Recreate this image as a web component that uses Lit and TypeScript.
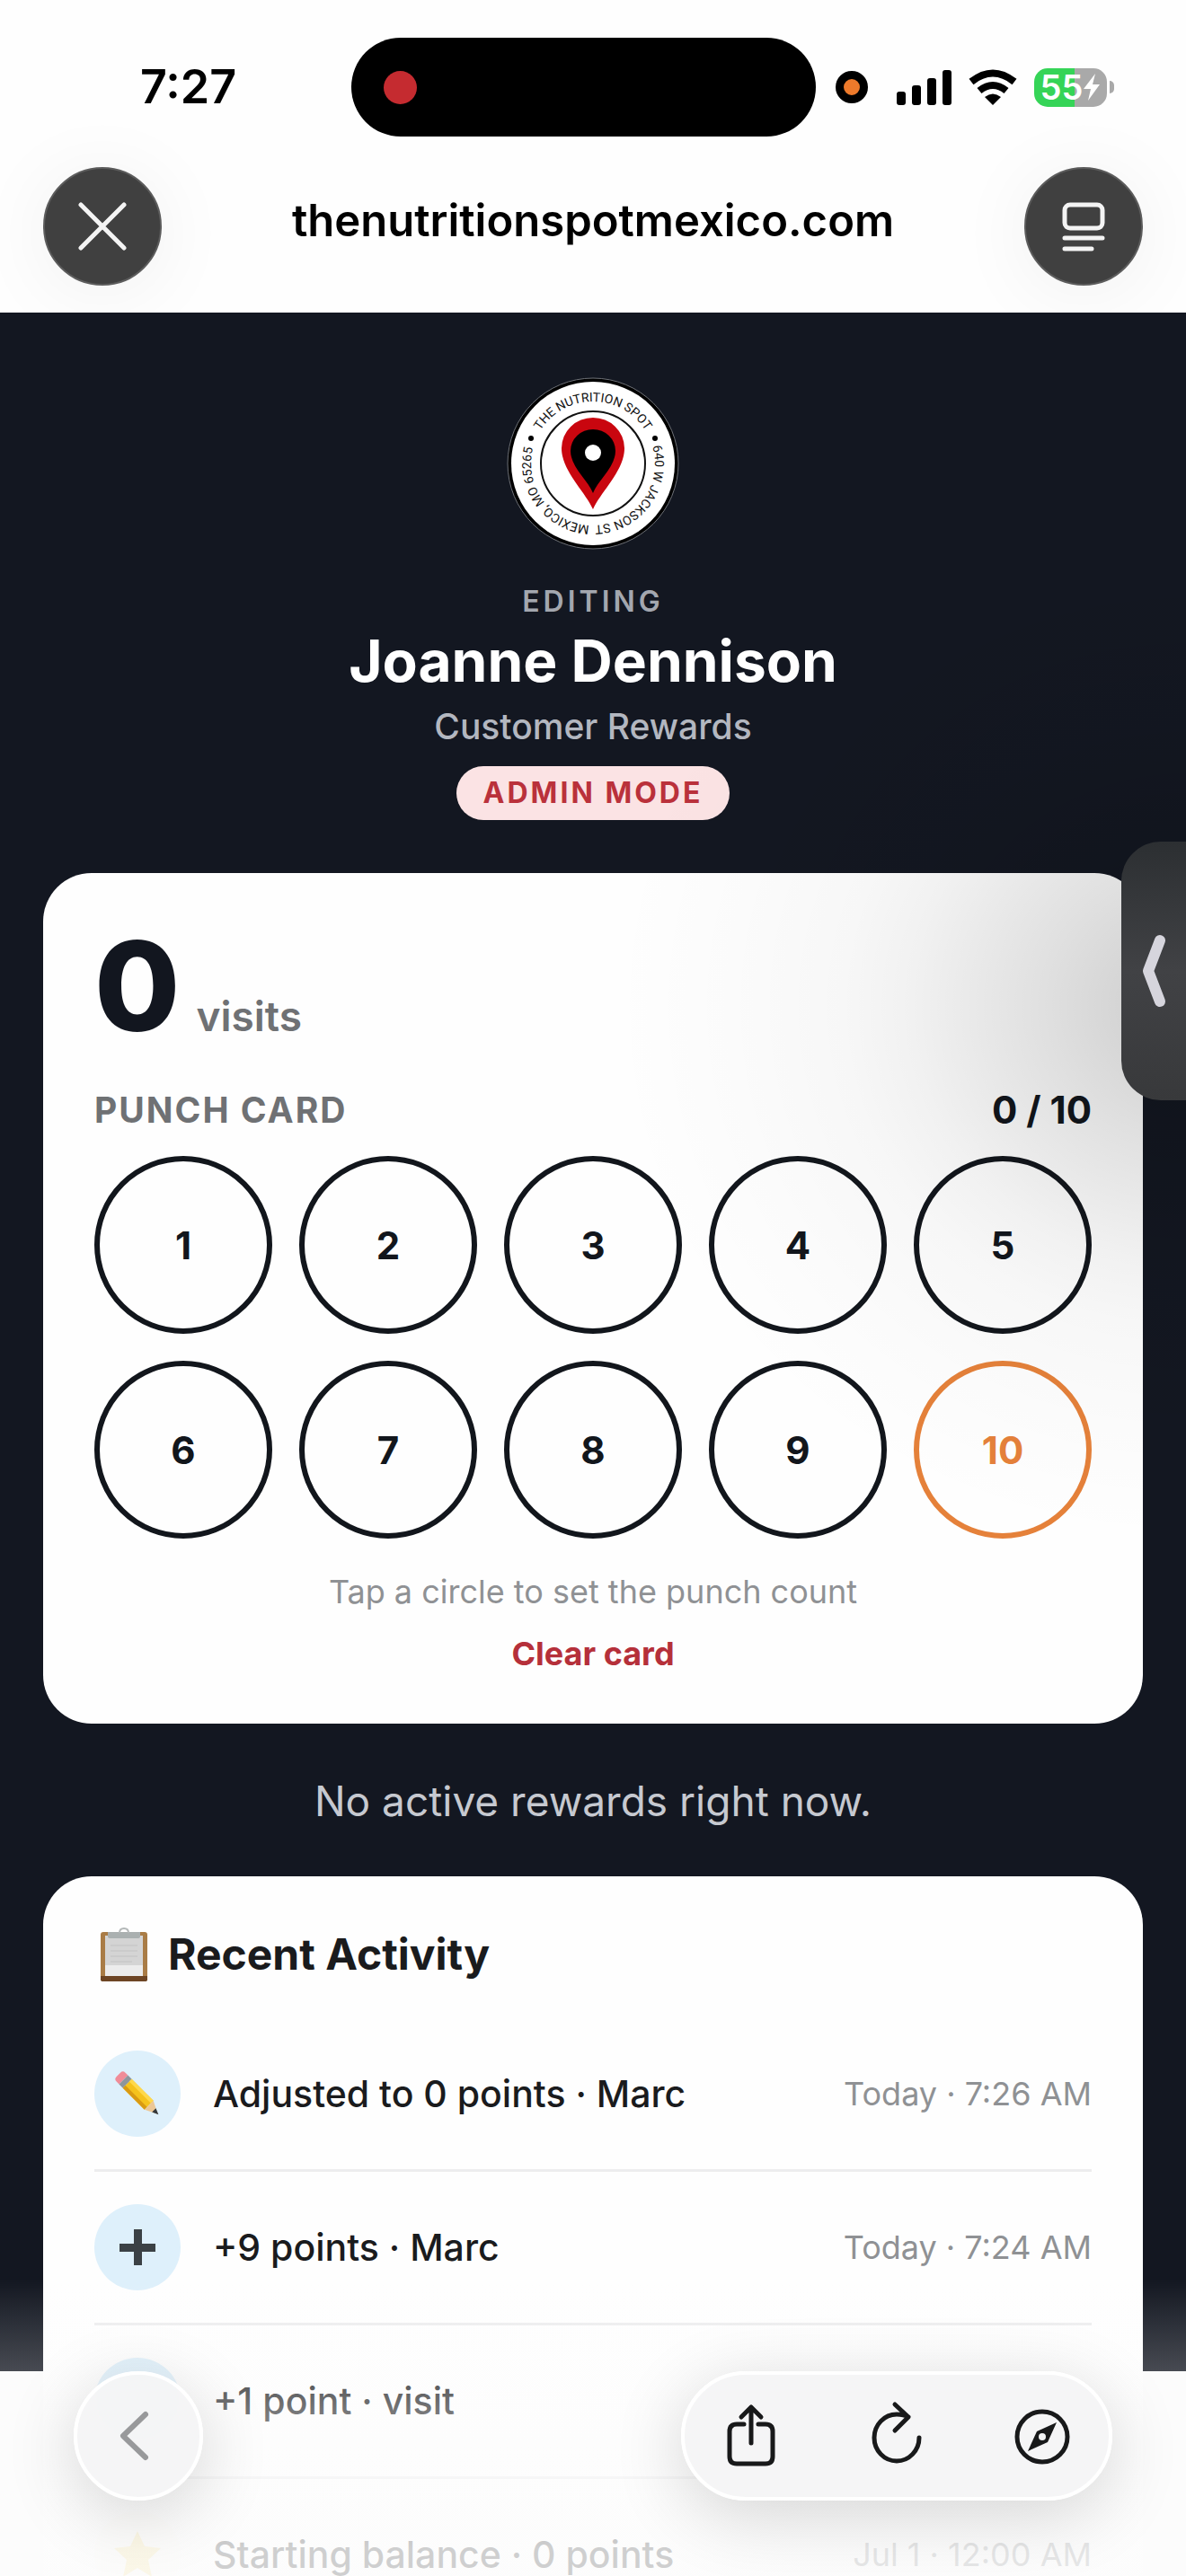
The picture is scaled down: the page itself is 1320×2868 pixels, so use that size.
import { css, html, svg, LitElement } from 'lit';
import { customElement, property, state } from 'lit/decorators.js';
import { classMap } from 'lit/directives/class-map.js';

interface Activity {
    icon: string;
    text: string;
    date: string;
}

const ACTIVITIES: Activity[] = [
    { icon: 'pencil', text: 'Adjusted to 0 points · Marc', date: 'Today · 7:26 AM' },
    { icon: 'plus', text: '+9 points · Marc', date: 'Today · 7:24 AM' },
    { icon: 'blank', text: '+1 point · visit', date: '' },
    { icon: 'star', text: 'Starting balance · 0 points', date: 'Jul 1 · 12:00 AM' },
];

const icons: Record<string, unknown> = {
    pencil: svg`
        <g transform="rotate(-45 26 26)">
            <path d="M19 0q0-4 4-4h6q4 0 4 4v4H19z" fill="#f08c98"/>
            <path d="M19 4h14v6H19z" fill="#8d959c"/>
            <path d="M19 10h14v34H19z" fill="#f5c21c"/>
            <path d="M19 10h4v34h-4z" fill="#d99a12"/>
            <path d="M29 10h4v34h-4z" fill="#ffd84a"/>
            <path d="M19 44h14l-7 14z" fill="#ecc796"/>
            <path d="M23 52h6l-3 7z" fill="#33373a"/>
        </g>`,
    plus: svg`<path d="M22 6h9v16h15v9H31v15h-9V31H6v-9h16z" fill="#3b4145"/>`,
    blank: svg``,
    star: svg`<path d="M26 0l8 17 18 2-14 13 4 19-16-10-16 10 4-19L0 19l18-2z" fill="#f8e59a"/>`,
};

@customElement('spot-logo')
export class SpotLogo extends LitElement {

    static styles = css`
            :host {
                display: block;
            }
            .logo {
                display: block;
                width: 192px;
                height: 192px;
            }
            .ring-text {
                font-family: Roboto, "Liberation Sans", sans-serif;
                font-size: 14px;
                fill: #111;
                text-anchor: middle;
            }
        `;

    render() {
        return html`
          <svg class="logo" viewBox="-96 -96 192 192" role="img" aria-label="The Nutrition Spot">
            <defs>
                <path id="ring" d="M0 69A69 69 0 0 1 0 -69A69 69 0 0 1 0 69"/>
            </defs>
            <circle r="95" fill="#000" stroke="#6d7076" stroke-width="1"/>
            <circle r="91" fill="#fff"/>
            <circle r="58" fill="none" stroke="#111" stroke-width="2"/>
            <text class="ring-text"><textPath href="#ring" startOffset="50%">THE NUTRITION SPOT</textPath></text>
            <text class="ring-text"><textPath href="#ring" startOffset="85%">640 W JACKSON ST</textPath></text>
            <text class="ring-text"><textPath href="#ring" startOffset="15%">MEXICO, MO 65265</textPath></text>
            <circle cx="-69" cy="-28" r="3"/>
            <circle cx="69" cy="-28" r="3"/>
            <path d="M0 51C-9 31-35 8-35-17A35 34 0 0 1 35-17C35 8 9 31 0 51z" fill="#c9060f"/>
            <path d="M0 33C-6 18-25 4-25-14A25 24 0 0 1 25-14C25 4 6 18 0 33z" fill="#000"/>
            <circle cy="-12" r="9" fill="#fff"/>
          </svg>`;
    }
}

@customElement('browser-header')
export class BrowserHeader extends LitElement {

    @property()
    address = '';

    static styles = css`
            :host {
                display: block;
                background-color: #fefefe;
                color: #000;
            }
            .status {
                display: grid;
                grid-template-columns: 391fr 517fr 412fr;
                align-items: center;
                padding-top: 42px;
            }
            .time {
                padding-left: 156px;
                font-size: 52px;
                font-weight: 600;
                line-height: 60px;
            }
            .island {
                display: flex;
                align-items: center;
                height: 110px;
                padding-left: 36px;
                border-radius: 55px;
                background-color: #000;
                box-sizing: border-box;
            }
            .recording {
                width: 37px;
                height: 37px;
                border-radius: 50%;
                background-color: #c52b30;
            }
            .indicators {
                display: flex;
                align-items: center;
                padding-left: 22px;
            }
            .camera {
                width: 18px;
                height: 18px;
                border: 9px solid #000;
                border-radius: 50%;
                background-color: #ee7a2b;
                margin-right: 32px;
            }
            .signal {
                width: 62px;
                height: 42px;
                margin-right: 17px;
            }
            .wifi {
                width: 56px;
                height: 42px;
                margin-right: 18px;
            }
            .battery {
                display: flex;
                align-items: center;
                justify-content: center;
                width: 81px;
                height: 43px;
                border-radius: 15px;
                background: linear-gradient(to right, #35d457 56%, #a9a9a9 56%);
                color: #fff;
                font-size: 38px;
                font-weight: 600;
            }
            .bolt {
                width: 20px;
                height: 30px;
            }
            .nub {
                width: 5px;
                height: 14px;
                margin-left: 3px;
                border-radius: 0 5px 5px 0;
                background-color: #a9a9a9;
            }
            .nav {
                display: flex;
                align-items: center;
                justify-content: space-between;
                padding: 34px 48px 30px;
            }
            .address {
                font-size: 49px;
                font-weight: 600;
                line-height: 60px;
                padding-bottom: 12px;
            }
            .round {
                display: flex;
                align-items: center;
                justify-content: center;
                width: 132px;
                height: 132px;
                padding: 0;
                border: 2px solid #5c5c5c;
                border-radius: 50%;
                background-color: #404040;
                box-shadow: 0 8px 90px rgba(0, 0, 0, 0.06);
            }
            .round svg {
                width: 60px;
                height: 60px;
                fill: none;
                stroke: #f4f4f4;
                stroke-width: 5;
                stroke-linecap: round;
                stroke-linejoin: round;
            }
        `;

    render() {
        return html`
          <div class="status">
            <span class="time">7:27</span>
            <div class="island"><span class="recording"></span></div>
            <div class="indicators">
                <span class="camera"></span>
                <svg class="signal" viewBox="0 0 62 42">
                    <rect x="0" y="26" width="10" height="15" rx="3"/>
                    <rect x="17" y="19" width="10" height="22" rx="3"/>
                    <rect x="34" y="11" width="10" height="30" rx="3"/>
                    <rect x="51" y="2" width="10" height="39" rx="3"/>
                </svg>
                <svg class="wifi" viewBox="0 0 56 42">
                    <path d="M28 41l-9-9q9-7 18 0z"/>
                    <path d="M13 25q15-12 30 0M4 15q24-19 48 0" fill="none" stroke="#000" stroke-width="8"/>
                </svg>
                <span class="battery">55<svg class="bolt" viewBox="0 0 20 30"><path d="M14 0L1 17h8L6 30 19 12h-8z" fill="#fff"/></svg></span>
                <span class="nub"></span>
            </div>
          </div>
          <nav class="nav">
            <button class="round" aria-label="Close">
                <svg viewBox="0 0 60 60"><path d="M6 6l48 48M54 6L6 54"/></svg>
            </button>
            <span class="address">${this.address}</span>
            <button class="round" aria-label="Reader">
                <svg viewBox="0 0 60 60"><rect x="9" y="6" width="42" height="26" rx="6"/><path d="M9 43h42M9 55h30"/></svg>
            </button>
          </nav>`;
    }
}

@customElement('punch-card')
export class PunchCard extends LitElement {

    @property({ type: Number })
    total = 10;

    @state()
    count = 0;

    static styles = css`
            :host {
                display: block;
            }
            .score {
                display: flex;
                align-items: baseline;
                gap: 18px;
                color: #6f7174;
                font-size: 46px;
                font-weight: 600;
            }
            .number {
                color: #12161f;
                font-size: 138px;
                font-weight: 800;
                line-height: 138px;
            }
            .heading {
                display: flex;
                justify-content: space-between;
                margin: 44px 0 26px;
                line-height: 50px;
            }
            .label {
                color: #6f7174;
                font-size: 39px;
                font-weight: 700;
                letter-spacing: 2px;
            }
            .progress {
                font-size: 42px;
                font-weight: 700;
            }
            .punches {
                display: grid;
                grid-template-columns: repeat(5, 1fr);
                gap: 30px;
            }
            .punch {
                aspect-ratio: 1;
                padding: 0;
                border: 6px solid #12161c;
                border-radius: 50%;
                background: none;
                color: #12161c;
                font-family: inherit;
                font-size: 42px;
                font-weight: 700;
            }
            .punch.filled {
                background-color: #12161c;
                color: #fff;
            }
            .punch.last {
                border-color: #e5813a;
                color: #e5813a;
            }
            .hint {
                margin: 35px 0 21px;
                color: #8f9194;
                font-size: 36px;
                line-height: 48px;
                text-align: center;
            }
            .clear {
                display: block;
                margin: 0 auto;
                padding: 0;
                border: 0;
                background: none;
                color: #b5303a;
                font-family: inherit;
                font-size: 36px;
                font-weight: 700;
                line-height: 48px;
            }
        `;

    render() {
        const numbers = Array.from({ length: this.total }, (_, i) => i + 1);
        return html`
          <div class="score"><span class="number">${this.count}</span> visits</div>
          <div class="heading">
            <span class="label">PUNCH CARD</span>
            <span class="progress">${this.count} / ${this.total}</span>
          </div>
          <div class="punches">
            ${numbers.map((n) => html`
                <button
                    class=${classMap({ punch: true, filled: n <= this.count, last: n === this.total })}
                    @click="${() => { this.count = n; }}">${n}</button>`)}
          </div>
          <p class="hint">Tap a circle to set the punch count</p>
          <button class="clear" @click="${() => { this.count = 0; }}">Clear card</button>`;
    }
}

@customElement('activity-list')
export class ActivityList extends LitElement {

    @property({ attribute: false })
    items: Activity[] = [];

    static styles = css`
            :host {
                display: block;
            }
            .title {
                display: flex;
                align-items: center;
                gap: 18px;
                margin: 0 0 41px;
                font-size: 48px;
                font-weight: 700;
                line-height: 60px;
                color: #1a1b1d;
            }
            .clipboard {
                width: 64px;
                height: 60px;
            }
            .list {
                margin: 0;
                padding: 0;
                list-style: none;
            }
            .row {
                display: flex;
                align-items: center;
                padding: 36px 0;
                border-bottom: 3px solid #ededee;
            }
            .icon {
                display: flex;
                align-items: center;
                justify-content: center;
                width: 96px;
                height: 96px;
                margin-right: 36px;
                border-radius: 50%;
                background-color: #def0fb;
            }
            .icon.star {
                background-color: #fdfcf8;
            }
            .icon svg {
                width: 52px;
                height: 52px;
                overflow: visible;
            }
            .text {
                flex: 1;
                color: #1a1b1d;
                font-size: 41px;
                font-weight: 500;
                line-height: 50px;
            }
            .date {
                color: #8f9194;
                font-size: 36px;
            }
        `;

    render() {
        return html`
          <h2 class="title">
            <svg class="clipboard" viewBox="0 0 64 60">
                <rect x="7" y="5" width="52" height="55" rx="3" fill="#a97c46"/>
                <path d="M7 54h52v4q0 2-3 2H10q-3 0-3-2z" fill="#6d4524"/>
                <rect x="12" y="9" width="42" height="45" fill="#d4d4d4"/>
                <path d="M12 42h42v12H12z" fill="#ececec"/>
                <path d="M18 20h30M18 26h30M18 32h30M18 38h24" stroke="#cbcbcb" stroke-width="2"/>
                <path d="M15 5h36v5q0 2-3 2H18q-3 0-3-2z" fill="#aab0b0"/>
                <path d="M28 6q0-5 5-5t5 5" fill="none" stroke="#b4b8b8" stroke-width="2"/>
            </svg>
            Recent Activity
          </h2>
          <ul class="list">
            ${this.items.map((item) => html`
                <li class="row">
                    <span class="icon ${item.icon}"><svg viewBox="0 0 52 52">${icons[item.icon]}</svg></span>
                    <span class="text">${item.text}</span>
                    <span class="date">${item.date}</span>
                </li>`)}
          </ul>`;
    }
}

@customElement('browser-toolbar')
export class BrowserToolbar extends LitElement {

    static styles = css`
            :host {
                display: flex;
                justify-content: space-between;
                padding: 0 82px 84px;
            }
            .back, .actions {
                display: flex;
                align-items: center;
                height: 144px;
                box-sizing: border-box;
                border: 4px solid #fff;
                border-radius: 72px;
                background-color: rgba(244, 244, 245, 0.93);
                box-shadow: 0 16px 80px rgba(0, 0, 0, 0.16);
                backdrop-filter: blur(12px);
            }
            .back {
                justify-content: center;
                width: 144px;
                padding: 0;
            }
            .actions {
                gap: 82px;
                padding: 0 34px;
            }
            .action {
                display: flex;
                padding: 0;
                border: 0;
                background: none;
            }
            svg {
                width: 80px;
                height: 80px;
                fill: none;
                stroke: #18191a;
                stroke-width: 5;
                stroke-linecap: round;
                stroke-linejoin: round;
            }
            .back svg {
                stroke: #98999b;
                stroke-width: 6;
            }
        `;

    render() {
        return html`
          <button class="back" aria-label="Back">
            <svg viewBox="0 0 80 80"><path d="M48 16L23 40l25 24"/></svg>
          </button>
          <div class="actions">
            <button class="action" aria-label="Share">
                <svg viewBox="0 0 80 80"><path d="M32 27h-8q-8 0-8 8v28q0 8 8 8h32q8 0 8-8V35q0-8-8-8h-8M40 48V8M29 19L40 8l11 11"/></svg>
            </button>
            <button class="action" aria-label="Reload">
                <svg viewBox="0 0 80 80"><path d="M65 42a25 26 0 1 1-25-26q8 0 13 3M38 5l15 14-15 15"/></svg>
            </button>
            <button class="action" aria-label="Open in browser">
                <svg viewBox="0 0 80 80">
                    <circle cx="40" cy="41" r="28"/>
                    <path d="M56 25L46 47 24 57 34 35z" fill="#18191a" stroke="none"/>
                    <circle cx="40" cy="41" r="4" fill="#f3f4f5" stroke="none"/>
                </svg>
            </button>
          </div>`;
    }
}

@customElement('app-root')
export class AppRoot extends LitElement {

    static styles = css`
            :host {
                position: relative;
                display: flex;
                flex-direction: column;
                height: 100vh;
                overflow: hidden;
                font-family: Inter, "Liberation Sans", sans-serif;
                color: #12161c;
            }
            .page {
                flex: 1;
                min-height: 0;
                overflow: hidden;
                padding: 72px 48px 0;
                background: linear-gradient(to bottom, #131721 calc(100% - 228px), #fcfcfc 0);
            }
            .profile {
                display: flex;
                flex-direction: column;
                align-items: center;
                margin-bottom: 59px;
            }
            .eyebrow {
                margin: 38px 0 10px;
                color: #a3a7af;
                font-size: 32px;
                font-weight: 600;
                line-height: 40px;
                letter-spacing: 4px;
            }
            .name {
                margin: 0;
                color: #fff;
                font-size: 64px;
                font-weight: 700;
                line-height: 72px;
            }
            .subtitle {
                margin: 13px 0 20px;
                color: #b3b7c0;
                font-size: 39px;
                font-weight: 500;
                line-height: 48px;
            }
            .badge {
                padding: 0 30px;
                border-radius: 30px;
                background-color: #fbe3e4;
                color: #ba313b;
                font-size: 32px;
                font-weight: 700;
                line-height: 60px;
                letter-spacing: 3px;
            }
            .card {
                padding: 57px 57px 54px;
                border-radius: 54px;
                background-color: #fefefe;
            }
            .empty {
                margin: 56px 0 54px;
                color: #c6c9d0;
                font-size: 46px;
                line-height: 60px;
                text-align: center;
            }
            .shade {
                position: absolute;
                top: 520px;
                right: 0;
                width: 640px;
                height: 1200px;
                pointer-events: none;
                background: radial-gradient(ellipse 100% 50% at right center,
                    rgba(0, 0, 0, 0.18), rgba(0, 0, 0, 0.16) 12%, rgba(0, 0, 0, 0.12) 24%,
                    rgba(0, 0, 0, 0.085) 36%, rgba(0, 0, 0, 0.052) 48%, rgba(0, 0, 0, 0.028) 60%,
                    rgba(0, 0, 0, 0.01) 80%, rgba(0, 0, 0, 0));
            }
            .drawer {
                position: absolute;
                top: 937px;
                right: 0;
                display: flex;
                align-items: center;
                justify-content: center;
                width: 72px;
                height: 288px;
                padding: 0;
                border: 0;
                border-radius: 44px 0 0 44px;
                background: linear-gradient(to bottom, #2c2f32, #414245 50%, #38393b);
            }
            .drawer svg {
                width: 30px;
                height: 88px;
                fill: none;
                stroke: #d6d5dd;
                stroke-width: 12;
                stroke-linecap: round;
                stroke-linejoin: round;
            }
            .fade {
                position: absolute;
                left: 0;
                right: 0;
                bottom: 0;
                height: 330px;
                pointer-events: none;
                background: linear-gradient(to bottom,
                    rgba(252, 252, 252, 0), rgba(252, 252, 252, 0.22) 100px,
                    rgba(252, 252, 252, 0.42) 150px, rgba(252, 252, 252, 0.8) 300px);
            }
            .toolbar {
                position: absolute;
                left: 0;
                right: 0;
                bottom: 0;
            }
        `;

    render() {
        return html`
          <browser-header address="thenutritionspotmexico.com"></browser-header>
          <main class="page">
            <header class="profile">
                <spot-logo></spot-logo>
                <p class="eyebrow">EDITING</p>
                <h1 class="name">Joanne Dennison</h1>
                <p class="subtitle">Customer Rewards</p>
                <span class="badge">ADMIN MODE</span>
            </header>
            <section class="card"><punch-card total="10"></punch-card></section>
            <p class="empty">No active rewards right now.</p>
            <section class="card"><activity-list .items=${ACTIVITIES}></activity-list></section>
          </main>
          <div class="shade"></div>
          <button class="drawer" aria-label="Open drawer">
            <svg viewBox="0 0 30 88"><path d="M22 10L9 44l13 34"/></svg>
          </button>
          <div class="fade"></div>
          <browser-toolbar class="toolbar"></browser-toolbar>`;
    }
}
